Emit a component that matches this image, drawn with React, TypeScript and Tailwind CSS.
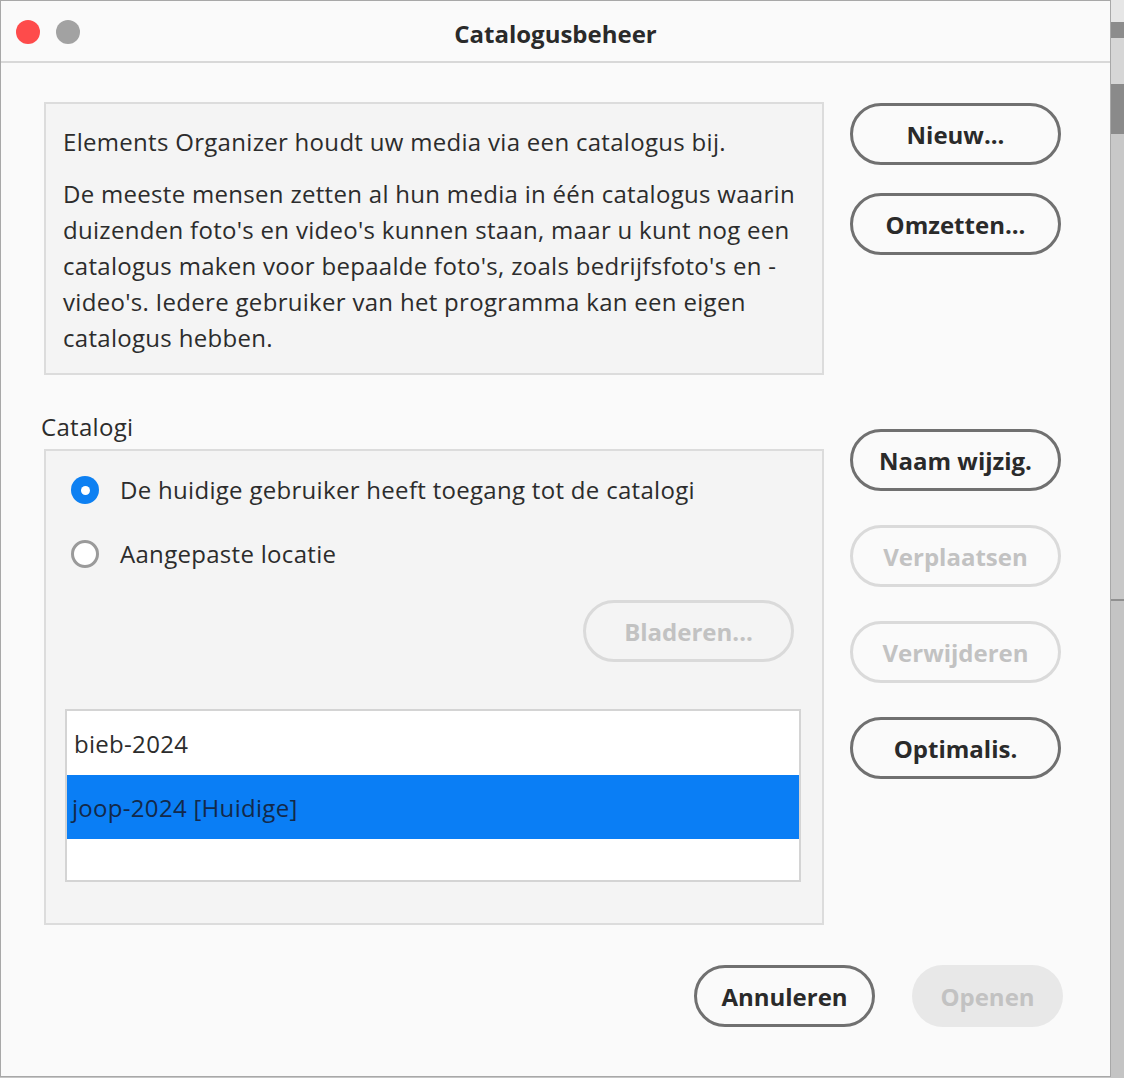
import React from "react";

const font = { fontFamily: "'Open Sans', Lato, sans-serif" };

function Btn({ label, disabled, className = "" }: { label: string; disabled?: boolean; className?: string }) {
  return (
    <div
      className={
        "flex h-[62px] items-center justify-center rounded-full border-[3px] pt-[2px] text-[24px] font-bold " +
        (disabled ? "border-[#dadada] text-[#c2c2c2]" : "border-[#707070] text-[#2a2a2a]") +
        " " +
        className
      }
    >
      {label}
    </div>
  );
}

export default function App() {
  return (
    <div className="flex h-[1078px] w-[1124px] overflow-hidden bg-[#c6c6c6]" style={font}>
      <div className="flex h-[1077px] w-[1111px] flex-col border border-[#a8a8a8] bg-[#fafafa]">
        <div className="relative flex h-[62px] shrink-0 items-center justify-center border-b-2 border-[#d8d8d8] pt-[6px]">
          <div className="absolute left-[15px] top-[19px] flex gap-[16px]">
            <div className="h-[24px] w-[24px] rounded-full bg-[#fe4b4b]" />
            <div className="h-[24px] w-[24px] rounded-full bg-[#a2a2a2]" />
          </div>
          <div className="text-[24px] font-bold text-[#2a2a2a]">Catalogusbeheer</div>
        </div>

        <div className="flex gap-[26px] pl-[43px] pt-[39px]">
          <div className="flex w-[780px] flex-col">
            <div className="h-[273px] border-2 border-[#dcdcdc] bg-[#f4f4f4] pl-[17px] pr-[8px] pt-[20px] text-[24px] leading-[36px] tracking-[0.3px] text-[#2c2c2c]">
              <p>Elements Organizer houdt uw media via een catalogus bij.</p>
              <p className="mt-[16px]">
                De meeste mensen zetten al hun media in één catalogus waarin duizenden foto's en video's kunnen staan, maar u kunt nog een catalogus maken voor bepaalde foto's, zoals bedrijfsfoto's en -video's. Iedere gebruiker van het programma kan een eigen catalogus hebben.
              </p>
            </div>
            <div className="-ml-[3px] mt-[34px] h-[36px] text-[24px] leading-[36px] tracking-[0.3px] text-[#2c2c2c]">Catalogi</div>
            <div className="mt-[4px] flex h-[476px] flex-col border-2 border-[#dcdcdc] bg-[#f4f4f4] pl-[19px] pr-[21px]">
              <div className="mt-[23px] flex h-[32px] items-center gap-[21px] pl-[6px]">
                <div className="flex h-[28px] w-[28px] items-center justify-center rounded-full bg-[#0d80f2]">
                  <div className="h-[9px] w-[9px] rounded-full bg-white" />
                </div>
                <span className="text-[24px] tracking-[0.3px] text-[#2c2c2c]">De huidige gebruiker heeft toegang tot de catalogi</span>
              </div>
              <div className="mt-[32px] flex h-[32px] items-center gap-[21px] pl-[6px]">
                <div className="h-[28px] w-[28px] rounded-full border-[3px] border-[#9a9a9a] bg-white" />
                <span className="text-[24px] tracking-[0.3px] text-[#2c2c2c]">Aangepaste locatie</span>
              </div>
              <div className="mt-[30px] flex justify-end pr-[7px]">
                <Btn label="Bladeren..." disabled className="w-[211px]" />
              </div>
              <div className="mt-[47px] flex h-[173px] flex-col border-2 border-[#d4d4d4] bg-white">
                <div className="flex h-[64px] items-center pl-[7px] pt-[2px] text-[24px] tracking-[0.3px] text-[#2c2c2c]">bieb-2024</div>
                <div className="flex h-[64px] items-center bg-[#0a7ef5] pl-[5px] pt-[2px] text-[24px] tracking-[0.3px] text-[#13294a]">joop-2024 [Huidige]</div>
              </div>
            </div>
          </div>

          <div className="flex w-[211px] flex-col pt-[1px]">
            <Btn label="Nieuw..." />
            <Btn label="Omzetten..." className="mt-[28px]" />
            <Btn label="Naam wijzig." className="mt-[174px]" />
            <Btn label="Verplaatsen" disabled className="mt-[34px]" />
            <Btn label="Verwijderen" disabled className="mt-[34px]" />
            <Btn label="Optimalis." className="mt-[34px]" />
          </div>
        </div>

        <div className="mt-[40px] flex justify-end gap-[37px] pr-[47px]">
          <Btn label="Annuleren" className="w-[181px]" />
          <div className="flex h-[62px] w-[151px] items-center justify-center rounded-full bg-[#e8e8e8] pt-[2px] text-[24px] font-bold text-[#c2c2c2]">
            Openen
          </div>
        </div>
      </div>
      <div className="flex flex-1 flex-col">
        <div className="h-[22px] bg-[#e6e6e6]" />
        <div className="h-[16px] bg-[#8c8c8c]" />
        <div className="h-[46px] bg-[#d6d6d6]" />
        <div className="h-[50px] bg-[#8a8a8a]" />
        <div className="h-[465px] bg-[#c8c8c8]" />
        <div className="h-[2px] bg-[#909090]" />
        <div className="flex-1 bg-[#c4c4c4]" />
      </div>
    </div>
  );
}
